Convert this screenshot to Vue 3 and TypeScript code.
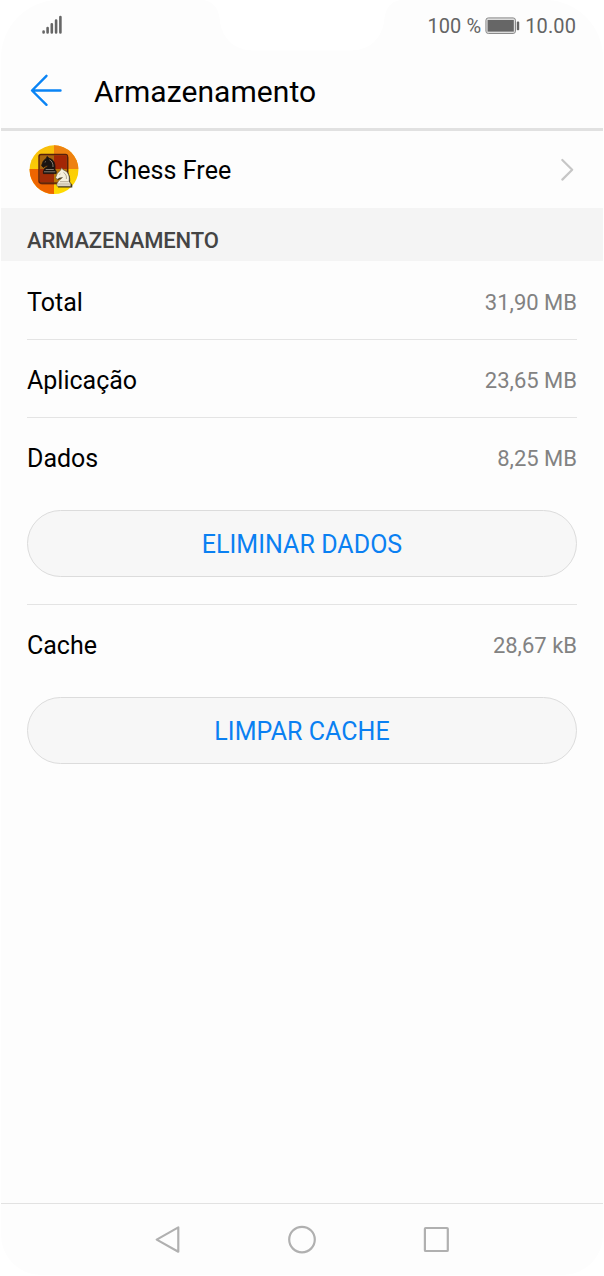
<script setup lang="ts">
interface StorageEntry {
  label: string
  value: string
  kind: string
  action?: string
}

const entries: StorageEntry[] = [
  { label: 'Total', value: '31,90 MB', kind: 'total' },
  { label: 'Aplicação', value: '23,65 MB', kind: 'app' },
  { label: 'Dados', value: '8,25 MB', kind: 'data', action: 'ELIMINAR DADOS' },
  { label: 'Cache', value: '28,67 kB', kind: 'cache', action: 'LIMPAR CACHE' },
]
</script>

<template>
  <div class="phone">
    <div class="notch">
      <svg width="196" height="51" viewBox="0 0 196 51">
        <path d="M0 0C9 2 14 7 15.500 18C17 37 29 50.500 50 50.500H146C167 50.500 179 37 180.500 18C182 7 187 2 196 0Z" />
      </svg>
    </div>

    <div class="status">
      <svg class="signal" width="22" height="20" viewBox="0 0 22 20">
        <path d="M1.600 16.600v.9M5.600 13v4.500M9.800 9.300v8.200M14.100 5.500v12M18.400 2v15.500" />
      </svg>
      <div class="status-right">
        <span class="percent">100 %</span>
        <svg class="battery" width="36" height="20" viewBox="0 0 36 20">
          <rect x=".9" y="1.9" width="29.6" height="15.6" rx="2.4" fill="#dcdcdc" stroke="#8b8b8b" stroke-width="1" />
          <rect x="2.6" y="4" width="26.2" height="11.6" fill="#666" />
          <rect x="31.8" y="5.6" width="2.4" height="8.6" rx=".8" fill="#666" />
        </svg>
        <span class="time">10.00</span>
      </div>
    </div>

    <header class="title-bar">
      <svg class="back" width="34" height="34" viewBox="0 0 34 34">
        <path d="M30.500 17.500H3M16.500 2.800L2 17.500L16.500 31.800" />
      </svg>
      <h1>Armazenamento</h1>
    </header>

    <div class="app-row">
      <svg class="app-icon" width="50" height="50" viewBox="0 0 50 50">
        <defs>
          <clipPath id="disc"><circle cx="25" cy="24.7" r="24.4" /></clipPath>
          <linearGradient id="yellow" x1="0" y1="0" x2="0" y2="1">
            <stop offset="0" stop-color="#f8bd0c" />
            <stop offset="1" stop-color="#ffdc00" />
          </linearGradient>
        </defs>
        <g clip-path="url(#disc)">
          <rect width="50" height="50" fill="url(#yellow)" />
          <path d="M25 0H50V24H25Z" fill="#ee8110" />
          <path d="M0 24H25V50H0Z" fill="#ee6500" />
        </g>
        <rect x="10.500" y="10.500" width="29" height="29" rx="2.500" fill="#4a1508" opacity=".6" />
        <rect x="10" y="9.500" width="28.500" height="28.500" rx="2" fill="#a9660f" stroke="#57200c" stroke-width="1.4" />
        <path d="M25 10.200H37.800V24H25Z" fill="#a32605" />
        <path d="M10.700 24H25V37.300H10.700Z" fill="#a02c07" />
        <path d="M25 24H37.800V37.300H25Z" fill="#b97708" />
        <path d="M14.400 26.400L15.600 23.500L20 20.400L17 20.800L14.200 22.400L12.600 20.600L14.300 16L17.600 13L18.200 11.400L20 13.300C24.500 14 26.600 18.500 25.900 24.200L27.200 26.400V28.600H14.400Z" fill="#191411" stroke="#191411" stroke-width=".8" stroke-linejoin="round" />
        <path d="M15 26.800H26.400M16.700 24.500H24.800M20.500 14.800C23 16 24.300 19 24 22M15.800 17.200L16.800 16.600" fill="none" stroke="#b3a79a" stroke-width=".7" />
        <path d="M28.500 39.800L30 36.400L33.500 33.200L30.400 33.400L28 34.800L26.500 33L28.300 28.500L31.800 25.200L32.500 23.300L34.400 25.300C39 26.500 41 31.500 40.300 37L42.500 39.500V42.200H28.200Z" fill="#211912" transform="translate(.8 .3)" opacity=".85" />
        <path d="M28 38.800L29.500 36L33.500 32.500L30.400 33L28 34.400L26.700 32.600L28.300 28.400L31.800 25L32.500 22.800L34.400 25C39 26.300 41 31 40 36.500L41.800 38.800V41.200H28Z" fill="#f5f0dd" stroke="#655a48" stroke-width=".6" stroke-linejoin="round" />
        <path d="M29 39H41M31 36.700H39.300M34.500 27.500C36.700 28.700 37.800 31 37.400 34M30.400 29.400L31.400 28.900" fill="none" stroke="#867b66" stroke-width=".6" />
      </svg>
      <span class="app-name">Chess Free</span>
      <svg class="chevron" width="16" height="26" viewBox="0 0 16 26">
        <path d="M2.300 3L12.200 12.800L2.300 22.600" />
      </svg>
    </div>

    <h2 class="section">ARMAZENAMENTO</h2>

    <main class="list">
      <section v-for="entry in entries" :key="entry.kind" class="entry" :class="entry.kind">
        <div class="line">
          <span class="label">{{ entry.label }}</span>
          <span class="value">{{ entry.value }}</span>
        </div>
        <button v-if="entry.action" class="action"><span>{{ entry.action }}</span></button>
      </section>
    </main>

    <nav class="nav">
      <svg width="30" height="32" viewBox="0 0 30 32">
        <path d="M25.300 3.400V27.700L3.700 15.600Z" />
      </svg>
      <svg width="30" height="32" viewBox="0 0 30 32">
        <circle cx="15" cy="15.600" r="12.800" />
      </svg>
      <svg width="30" height="32" viewBox="0 0 30 32">
        <rect x="3.900" y="4" width="22.900" height="23" rx=".8" />
      </svg>
    </nav>
  </div>
</template>

<style>
body {
  margin: 0;
  background: #fff;
}
</style>

<style scoped>
.phone {
  position: relative;
  display: flex;
  flex-direction: column;
  box-sizing: border-box;
  width: 602px;
  height: 1275px;
  margin: 0 1px 1px;
  overflow: hidden;
  border-radius: 58px 58px 40px 40px;
  background: #fdfdfd;
  color: #000;
  font-family: Roboto, "Liberation Sans", sans-serif;
}
.notch {
  position: absolute;
  top: 0;
  left: 203px;
  height: 51px;
}
.notch path {
  fill: #fff;
}
.status {
  display: flex;
  align-items: center;
  justify-content: space-between;
  height: 52px;
  padding: 0 27px 0 41px;
  color: #646464;
  font-size: 20px;
  line-height: 52px;
}
.signal {
  margin-top: -2px;
}
.signal path {
  fill: none;
  stroke: #666;
  stroke-width: 2.6;
  stroke-linecap: round;
}
.status-right {
  display: flex;
  align-items: center;
  letter-spacing: 0.1px;
}
.battery {
  margin: 0 4px 0 4px;
}
.title-bar {
  display: flex;
  align-items: center;
  box-sizing: border-box;
  height: 79px;
  padding: 0 29px;
  border-bottom: 3px solid #e1e1e1;
}
.back path {
  fill: none;
  stroke: #0a84f5;
  stroke-width: 2.4;
  stroke-linecap: round;
  stroke-linejoin: round;
}
h1 {
  margin: 3px 0 0 30px;
  font-size: 30px;
  font-weight: 400;
  line-height: 40px;
  letter-spacing: 0.08px;
}
.app-row {
  display: flex;
  align-items: center;
  height: 77px;
  padding: 0 27px 0 28px;
}
.app-name {
  margin: 2px 0 0 28px;
  font-size: 25px;
  letter-spacing: 0.08px;
}
.chevron {
  margin-left: auto;
}
.chevron path {
  fill: none;
  stroke: #c6c6c6;
  stroke-width: 2.2;
  stroke-linecap: round;
  stroke-linejoin: round;
}
.section {
  box-sizing: border-box;
  height: 53px;
  margin: 0;
  padding: 6px 26px 0;
  background: #f4f4f4;
  color: #444;
  font-size: 22px;
  font-weight: 500;
  line-height: 54px;
  letter-spacing: -0.16px;
}
.list {
  flex: 1;
  padding: 0 26px;
}
.entry {
  box-sizing: border-box;
  height: 78px;
  border-bottom: 1px solid #e4e4e4;
}
.entry.total {
  height: 79px;
}
.entry.data {
  height: 187px;
}
.entry.cache {
  border-bottom: 0;
}
.line {
  display: flex;
  align-items: center;
  justify-content: space-between;
  height: 80px;
}
.total .line {
  height: 82px;
}
.label {
  font-size: 25px;
}
.value {
  color: #828282;
  font-size: 22px;
}
.action {
  display: block;
  box-sizing: border-box;
  width: 550px;
  height: 67px;
  margin: 12px 0 0;
  padding: 2px 0 0;
  border: 1px solid #dcdcdc;
  border-radius: 34px;
  background: #f7f7f7;
  color: #0a80f2;
  font: 400 25px/63px Roboto, "Liberation Sans", sans-serif;
  letter-spacing: 0.04px;
}
.nav {
  display: flex;
  align-items: center;
  justify-content: center;
  gap: 104px;
  box-sizing: border-box;
  height: 72px;
  border-top: 1px solid #e2e2e2;
}
.nav svg {
  fill: none;
  stroke: #b0b0b0;
  stroke-width: 2.2;
  stroke-linejoin: round;
}
</style>
